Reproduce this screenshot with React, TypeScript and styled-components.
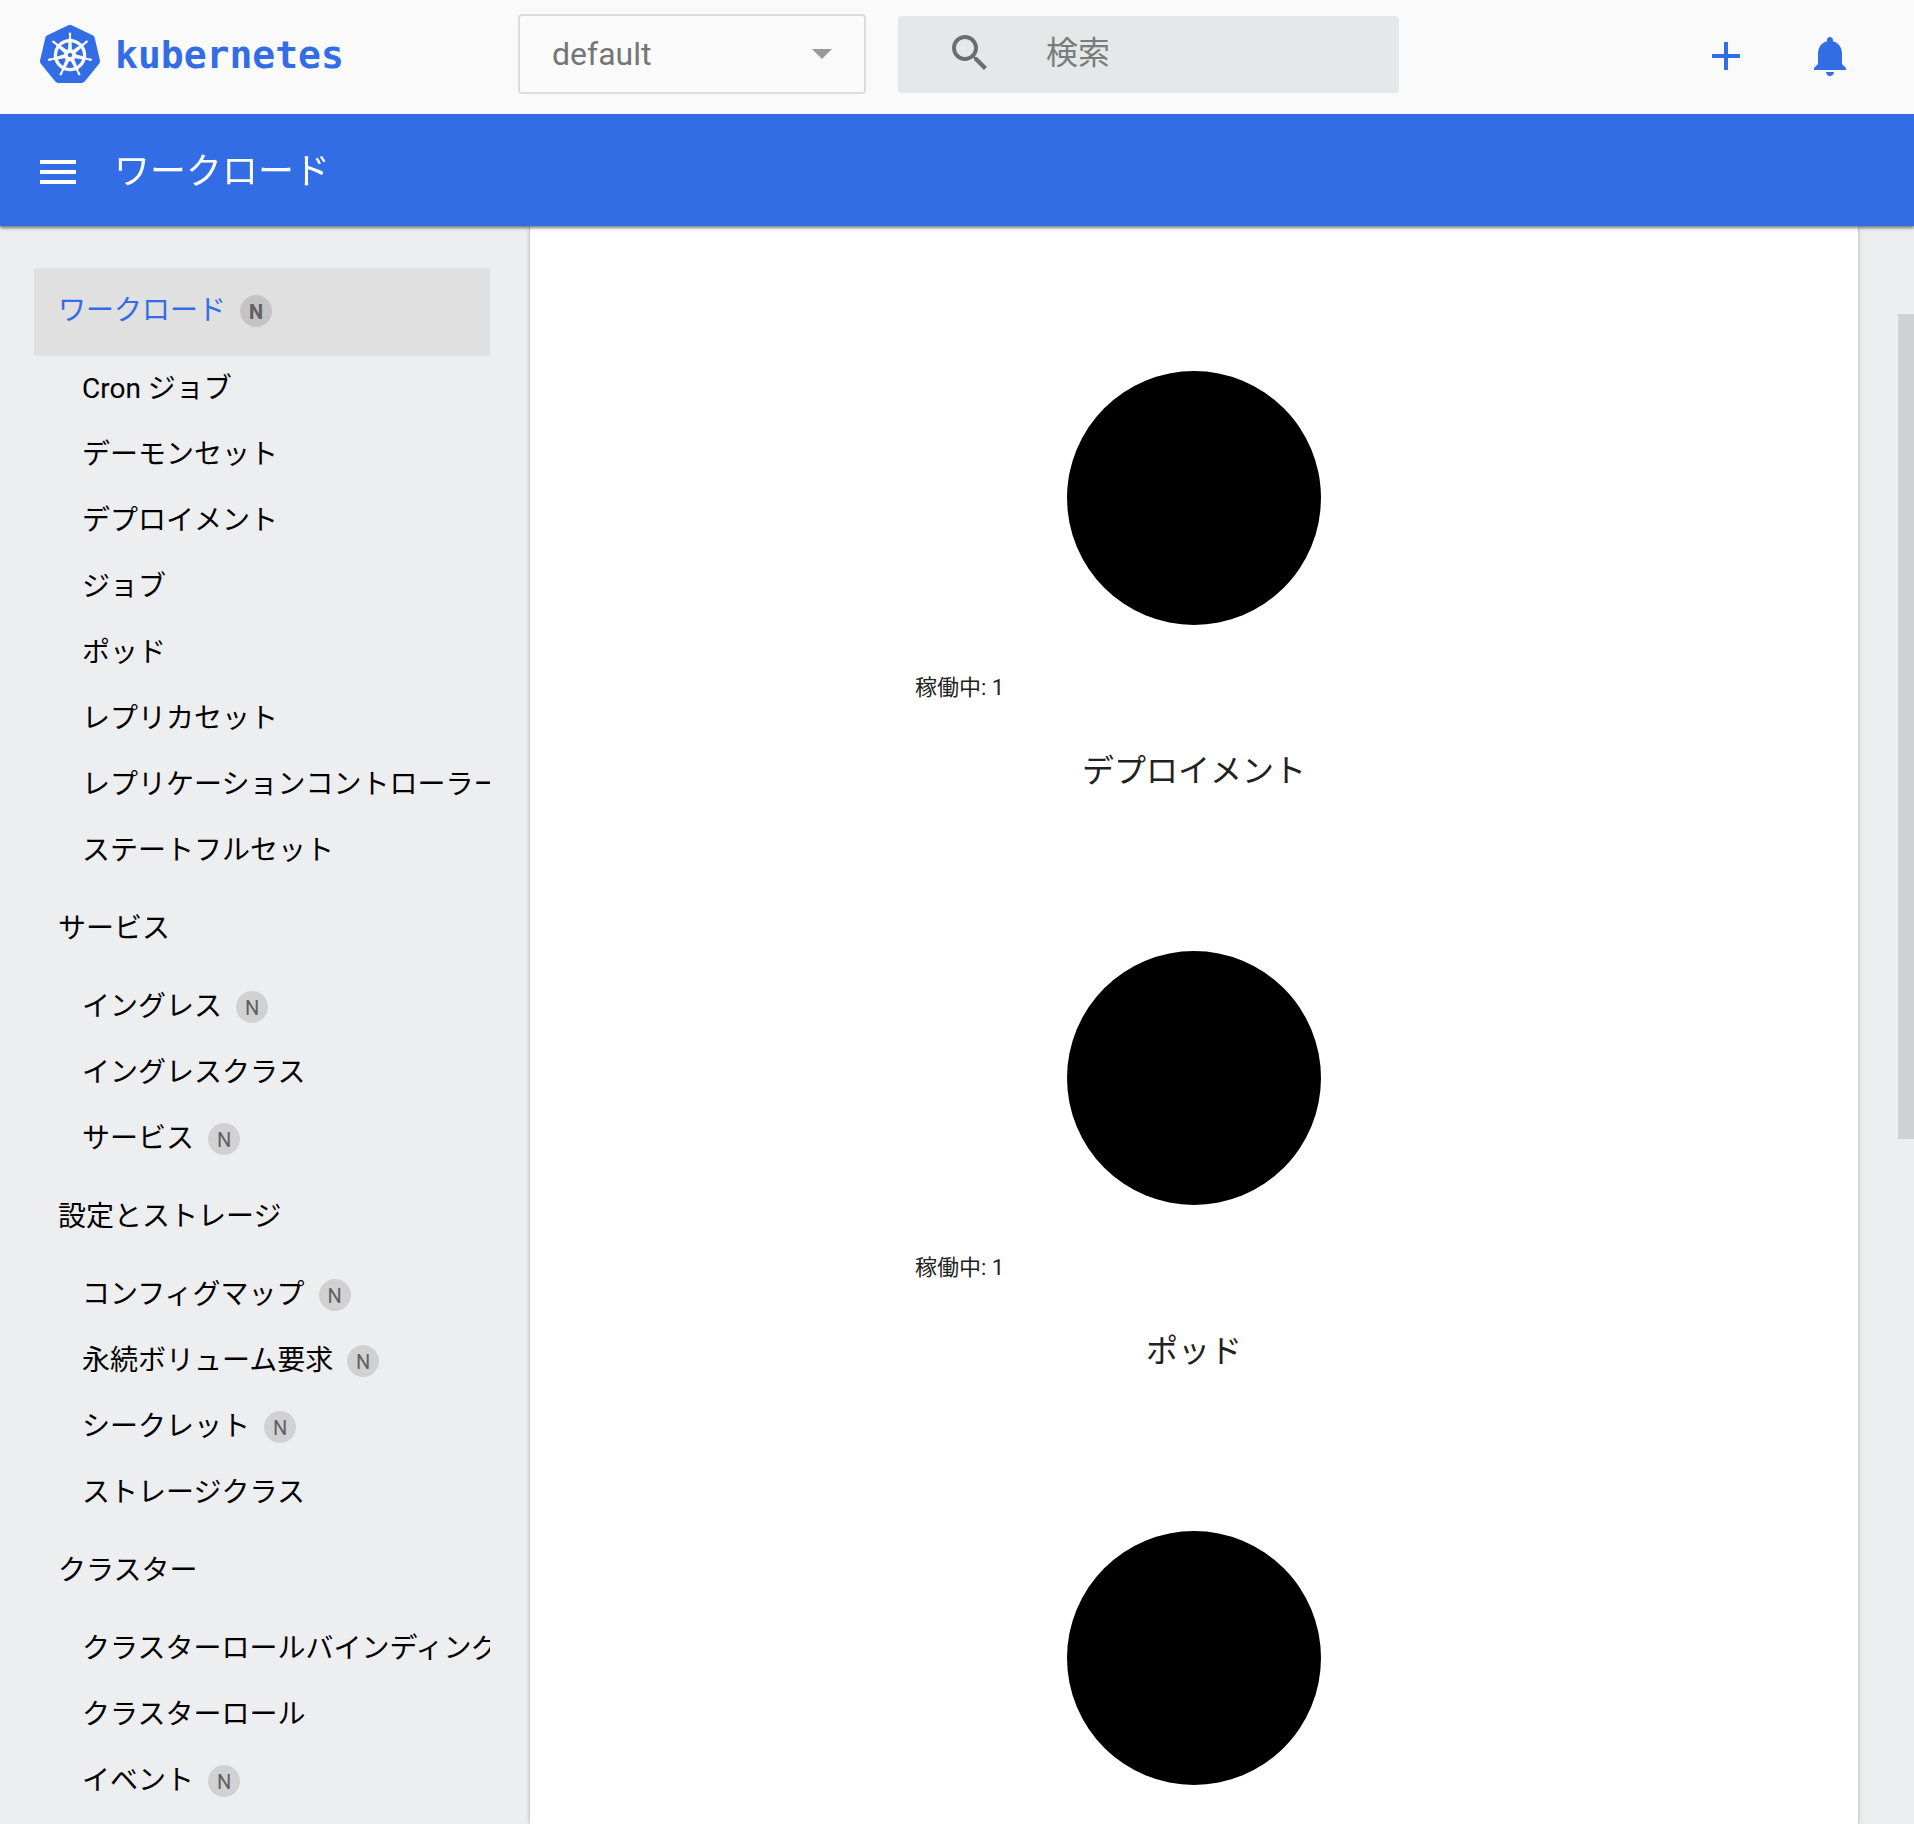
import React from 'react';
import styled, { createGlobalStyle, css } from 'styled-components';
import { SiKubernetes } from 'react-icons/si';

const BLUE = '#326de6';

const GlobalStyle = createGlobalStyle`
  *, *::before, *::after { box-sizing: border-box; }
  body {
    margin: 0;
    background: #edeef0;
    color: #212121;
    font-family: Roboto, "Noto Sans CJK JP", sans-serif;
    font-size: 28px;
  }
  a { color: inherit; text-decoration: none; }
  ul { list-style: none; margin: 0; padding: 0; }
  button { border: 0; padding: 0; background: none; cursor: pointer; }
`;

const Page = styled.div`
  display: flex;
  flex-direction: column;
  height: 100vh;
  overflow: hidden;
`;

const Header = styled.header`
  display: flex;
  align-items: center;
  height: 114px;
  flex: none;
  padding: 0 60px 6px 40px;
  background: #fafafa;
`;

const Brand = styled.a`
  display: flex;
  align-items: center;
  gap: 15px;
  flex: 0 0 478px;
  color: ${BLUE};
`;

const BrandName = styled.span`
  padding-top: 2px;
  font: bold 38px/48px "DejaVu Sans Mono", monospace;
`;

const NamespaceField = styled.div`
  position: relative;
  flex: 0 1 348px;
  height: 80px;
`;

const NamespaceSelect = styled.select`
  appearance: none;
  width: 100%;
  height: 100%;
  padding: 0 64px 0 32px;
  border: 2px solid #dcdcdc;
  border-radius: 4px;
  background: transparent;
  color: #757575;
  font: 32px/40px Roboto, "Noto Sans CJK JP", sans-serif;
`;

const SelectArrow = styled.svg`
  position: absolute;
  top: 35px;
  right: 34px;
  width: 20px;
  height: 10px;
  fill: #999;
  pointer-events: none;
`;

const SearchField = styled.label`
  display: flex;
  align-items: center;
  gap: 52px;
  flex: 0 1 501px;
  height: 77px;
  min-width: 0;
  margin-left: 32px;
  padding: 0 24px 2px 48px;
  border-radius: 4px;
  background: #e4e8e8;
  color: #6b6e6e;
`;

const SearchInput = styled.input`
  flex: 1;
  min-width: 0;
  padding: 0;
  border: 0;
  outline: 0;
  background: transparent;
  color: #424242;
  font: 32px/48px Roboto, "Noto Sans CJK JP", sans-serif;
  &::placeholder { color: #7a7c7c; opacity: 1; }
`;

const Actions = styled.div`
  display: flex;
  gap: 56px;
  margin-left: auto;
  padding: 4px 0 0 32px;
`;

const IconButton = styled.button`
  display: flex;
  color: inherit;
`;

const ActionButton = styled(IconButton)`
  color: ${BLUE};
`;

const Icon = styled.svg`
  display: block;
  flex: none;
  width: 48px;
  height: 48px;
  fill: currentColor;
`;

const Toolbar = styled.div`
  position: relative;
  z-index: 1;
  display: flex;
  align-items: center;
  gap: 32px;
  flex: none;
  height: 112px;
  padding: 4px 34px 0;
  background: ${BLUE};
  color: #fff;
  box-shadow: 0 2px 3px rgba(0, 0, 0, 0.5);
`;

const Title = styled.h1`
  margin: 0;
  font-size: 36px;
  font-weight: 400;
  line-height: 48px;
`;

const Body = styled.div`
  position: relative;
  display: flex;
  flex: 1;
  min-height: 0;
`;

const Sidebar = styled.nav`
  flex: 0 0 530px;
  padding: 41px 40px 0 34px;
  overflow-y: auto;
  scrollbar-width: none;
`;

const linkBase = css`
  display: flex;
  align-items: center;
  gap: 14px;
  overflow: hidden;
  white-space: nowrap;
  line-height: 40px;
`;

const GroupLink = styled.a<{ $active?: boolean }>`
  ${linkBase}
  height: 88px;
  margin: 1px 0;
  padding: 0 0 2px 24px;
  border-radius: 4px 0 0 4px;
  color: ${(p) => (p.$active ? BLUE : '#000')};
  background: ${(p) => (p.$active ? '#e0e0e0' : 'transparent')};
`;

const ItemLink = styled.a`
  ${linkBase}
  height: 66px;
  padding: 0 0 2px 48px;
  color: #000;
`;

const Badge = styled.span<{ $strong?: boolean }>`
  flex: none;
  width: 32px;
  height: 32px;
  border-radius: 50%;
  background: rgba(0, 0, 0, 0.12);
  color: #606060;
  font-size: 20px;
  font-weight: ${(p) => (p.$strong ? 700 : 400)};
  line-height: 34px;
  text-align: center;
`;

const Content = styled.main`
  flex: 1;
  min-width: 0;
  margin-right: 56px;
  overflow-y: auto;
  scrollbar-width: none;
  background: #fff;
  box-shadow: 0 0 4px rgba(0, 0, 0, 0.3);
`;

const StatusCard = styled.section`
  display: flex;
  flex-direction: column;
  align-items: center;
  height: 580px;
  padding-top: 145px;
`;

const Chart = styled.svg`
  flex: none;
  width: 254px;
  height: 254px;
`;

const Legend = styled.ul`
  width: 100%;
  max-width: 558px;
  margin-top: 47px;
  font-size: 22px;
  line-height: 32px;
`;

const StatusTitle = styled.h2`
  margin: 43px 0 0;
  font-size: 32px;
  font-weight: 400;
  line-height: 48px;
`;

const ScrollThumb = styled.div`
  position: absolute;
  top: 88px;
  right: 0;
  width: 16px;
  height: 825px;
  background: #d0d1d3;
`;

type Entry = { label: string; badge?: boolean };
type Group = Entry & { active?: boolean; items: Entry[] };

const groups: Group[] = [
  {
    label: 'ワークロード',
    badge: true,
    active: true,
    items: [
      { label: 'Cron ジョブ' },
      { label: 'デーモンセット' },
      { label: 'デプロイメント' },
      { label: 'ジョブ' },
      { label: 'ポッド' },
      { label: 'レプリカセット' },
      { label: 'レプリケーションコントローラー' },
      { label: 'ステートフルセット' },
    ],
  },
  {
    label: 'サービス',
    items: [
      { label: 'イングレス', badge: true },
      { label: 'イングレスクラス' },
      { label: 'サービス', badge: true },
    ],
  },
  {
    label: '設定とストレージ',
    items: [
      { label: 'コンフィグマップ', badge: true },
      { label: '永続ボリューム要求', badge: true },
      { label: 'シークレット', badge: true },
      { label: 'ストレージクラス' },
    ],
  },
  {
    label: 'クラスター',
    items: [
      { label: 'クラスターロールバインディング' },
      { label: 'クラスターロール' },
      { label: 'イベント', badge: true },
    ],
  },
];

const statuses = [
  { name: 'デプロイメント', running: 1 },
  { name: 'ポッド', running: 1 },
  { name: 'レプリカセット', running: 1 },
];

function NavGroup({ group }: { group: Group }) {
  return (
    <li>
      <GroupLink href="#" $active={group.active}>
        <span>{group.label}</span>
        {group.badge && <Badge $strong>N</Badge>}
      </GroupLink>
      <ul>
        {group.items.map((item) => (
          <li key={item.label}>
            <ItemLink href="#">
              <span>{item.label}</span>
              {item.badge && <Badge>N</Badge>}
            </ItemLink>
          </li>
        ))}
      </ul>
    </li>
  );
}

export default function App() {
  return (
    <Page>
      <GlobalStyle />
      <Header>
        <Brand href="#">
          <SiKubernetes size={60} aria-hidden />
          <BrandName>kubernetes</BrandName>
        </Brand>
        <NamespaceField>
          <NamespaceSelect aria-label="Namespace" defaultValue="default">
            <option value="default">default</option>
          </NamespaceSelect>
          <SelectArrow viewBox="0 0 20 10" aria-hidden>
            <path d="M0 0h20L10 10z" />
          </SelectArrow>
        </NamespaceField>
        <SearchField>
          <Icon viewBox="0 0 24 24" aria-hidden>
            <path d="M15.5 14h-.79l-.28-.27C15.41 12.59 16 11.11 16 9.5 16 5.91 13.09 3 9.5 3S3 5.91 3 9.5 5.91 16 9.5 16c1.61 0 3.09-.59 4.23-1.57l.27.28v.79l5 4.99L20.49 19l-4.99-5zm-6 0C7.01 14 5 11.99 5 9.5S7.01 5 9.5 5 14 7.01 14 9.5 11.99 14 9.5 14z" />
          </Icon>
          <SearchInput type="text" placeholder="検索" aria-label="検索" />
        </SearchField>
        <Actions>
          <ActionButton type="button" aria-label="Create">
            <Icon viewBox="0 0 24 24" aria-hidden>
              <path d="M19 13h-6v6h-2v-6H5v-2h6V5h2v6h6v2z" />
            </Icon>
          </ActionButton>
          <ActionButton type="button" aria-label="Notifications">
            <Icon viewBox="0 0 24 24" aria-hidden>
              <path d="M12 22c1.1 0 2-.9 2-2h-4c0 1.1.89 2 2 2zm6-6v-5c0-3.07-1.64-5.64-4.5-6.32V4c0-.83-.67-1.5-1.5-1.5s-1.5.67-1.5 1.5v.68C7.63 5.36 6 7.92 6 11v5l-2 2v1h16v-1l-2-2z" />
            </Icon>
          </ActionButton>
        </Actions>
      </Header>
      <Toolbar>
        <IconButton type="button" aria-label="Menu">
          <Icon viewBox="0 0 24 24" aria-hidden>
            <path d="M3 18h18v-2H3v2zm0-5h18v-2H3v2zm0-7v2h18V6H3z" />
          </Icon>
        </IconButton>
        <Title>ワークロード</Title>
      </Toolbar>
      <Body>
        <Sidebar>
          <ul>
            {groups.map((group) => (
              <NavGroup key={group.label} group={group} />
            ))}
          </ul>
        </Sidebar>
        <Content>
          {statuses.map((status) => (
            <StatusCard key={status.name}>
              <Chart viewBox="0 0 254 254" aria-hidden>
                <circle cx="127" cy="127" r="127" />
              </Chart>
              <Legend>
                <li>稼働中: {status.running}</li>
              </Legend>
              <StatusTitle>{status.name}</StatusTitle>
            </StatusCard>
          ))}
        </Content>
        <ScrollThumb />
      </Body>
    </Page>
  );
}
